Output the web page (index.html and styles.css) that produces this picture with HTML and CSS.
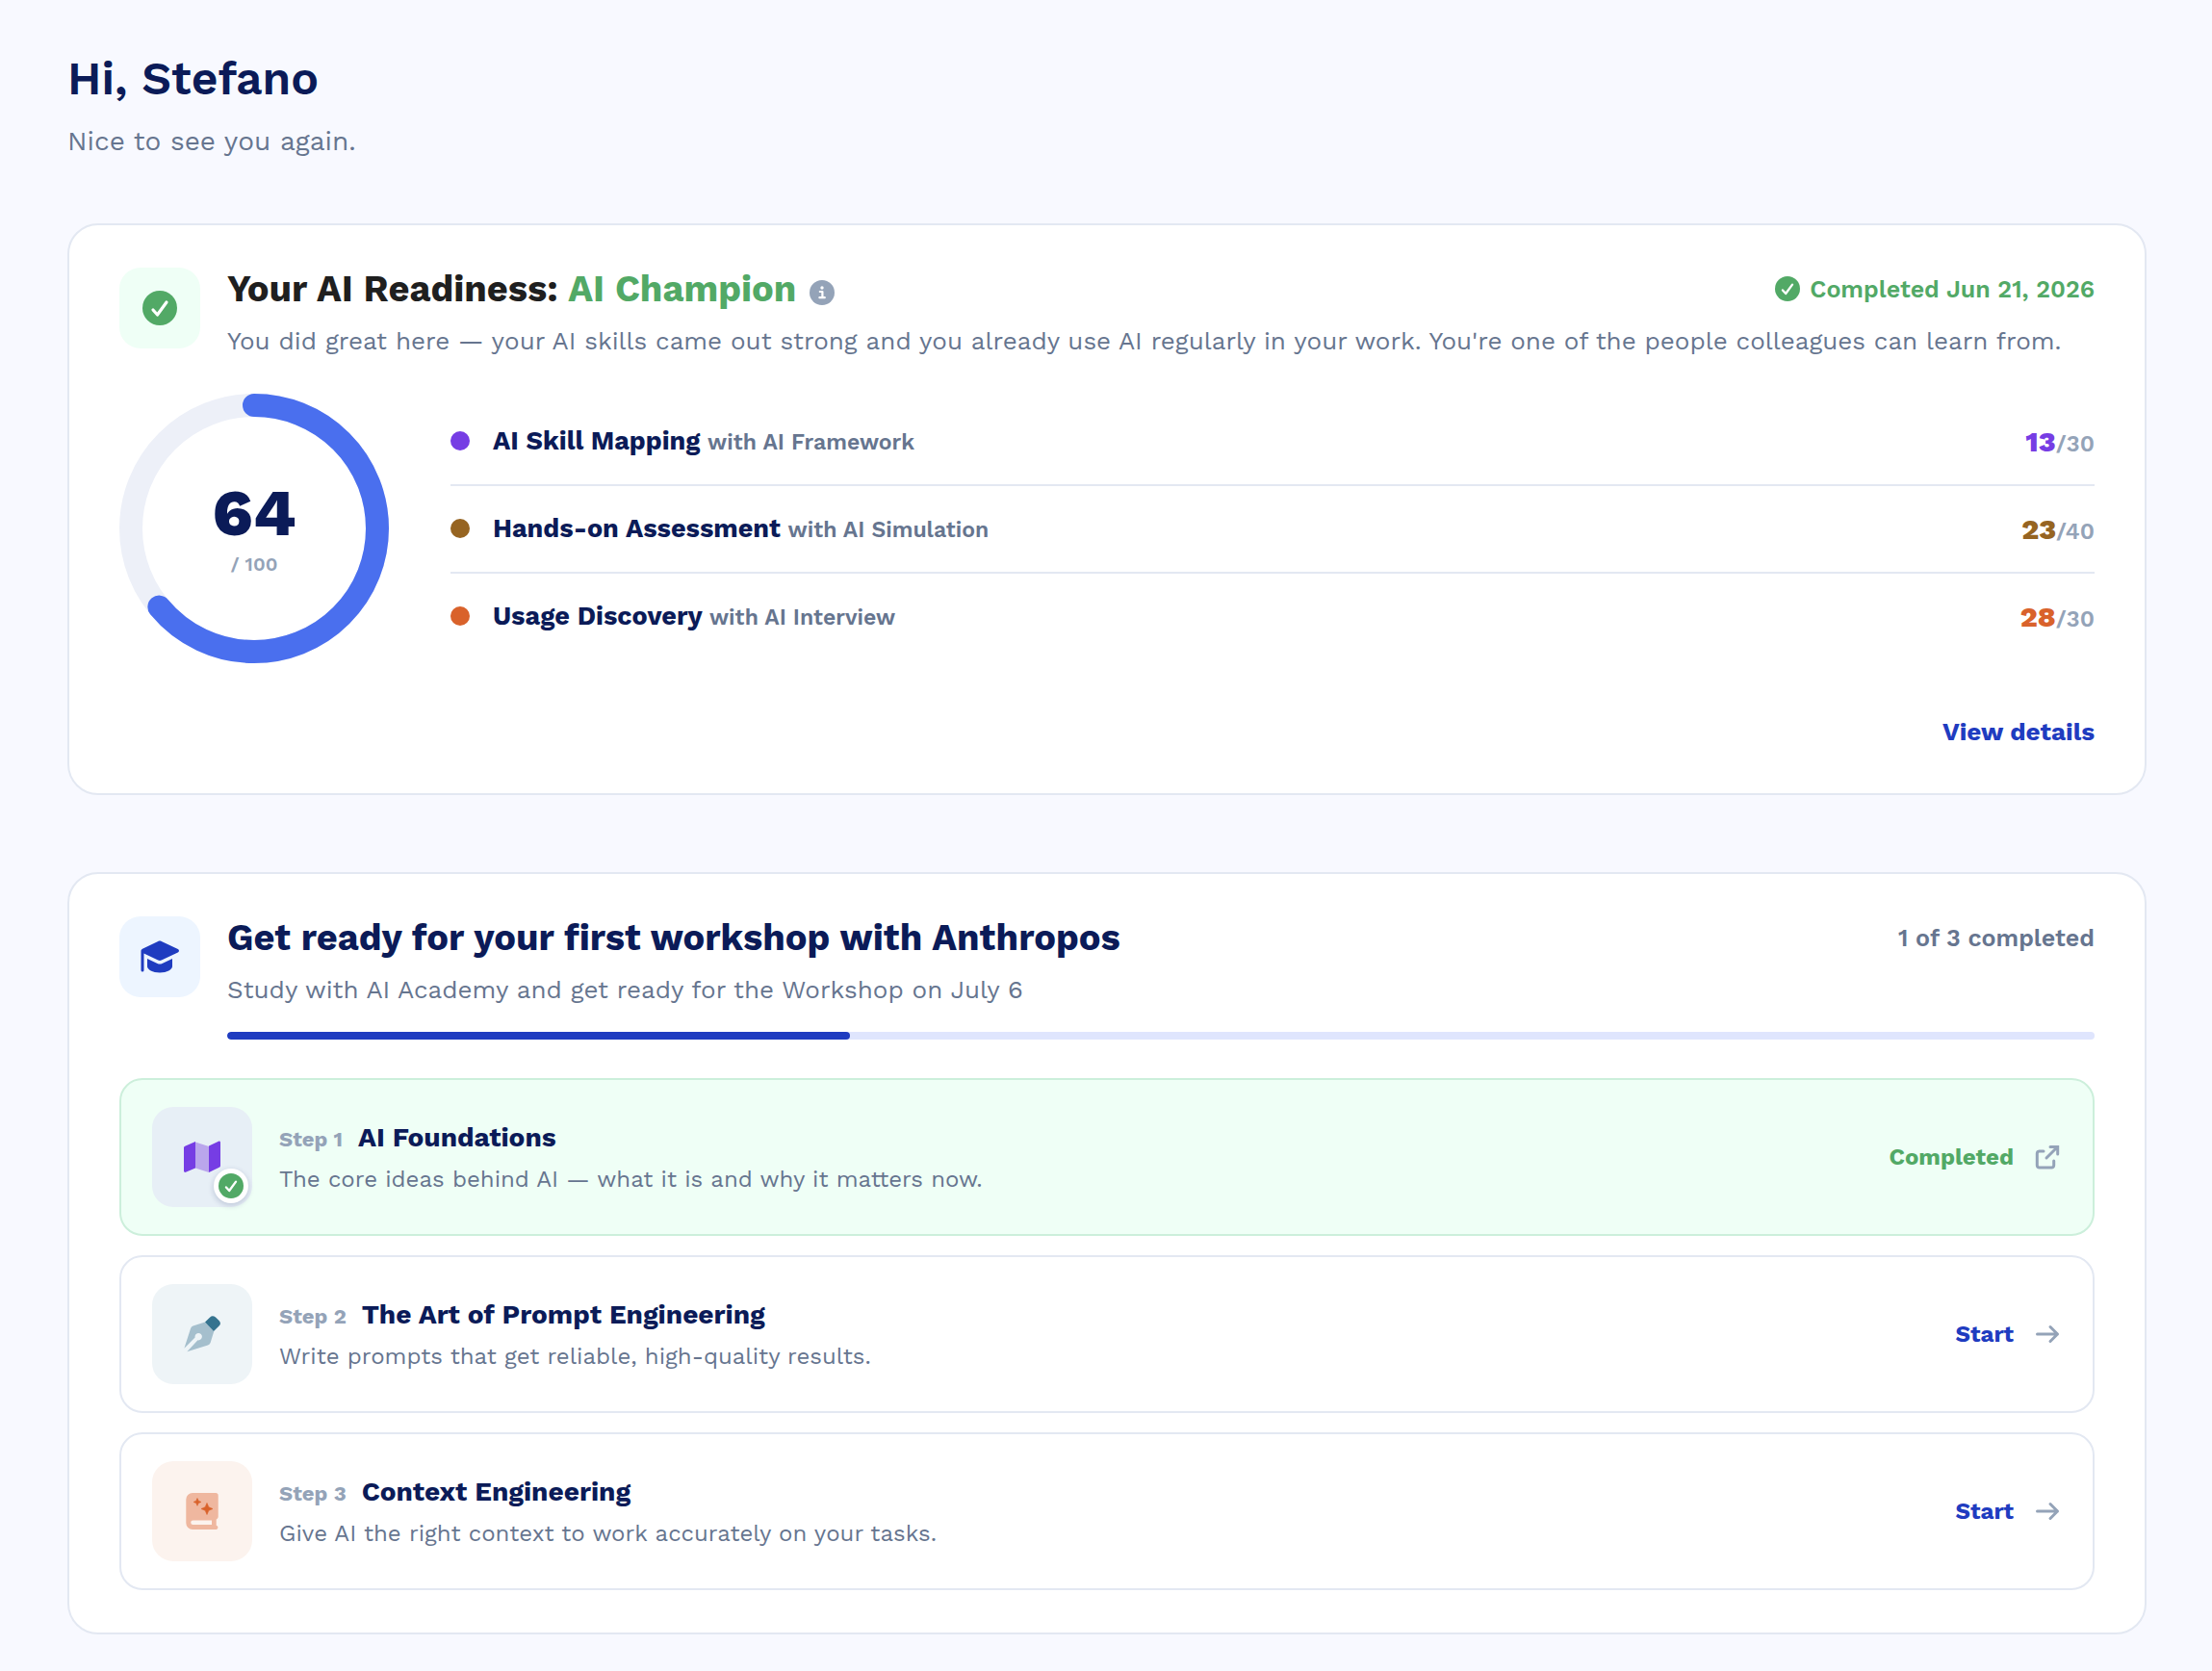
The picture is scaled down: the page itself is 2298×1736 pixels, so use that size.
FILE: index.html
```html
<!DOCTYPE html>
<html lang="en">
<head>
<meta charset="utf-8">
<meta name="viewport" content="width=device-width, initial-scale=1">
<title>AI Readiness</title>
<link rel="stylesheet" href="styles.css">
</head>
<body>
<svg class="sprite" aria-hidden="true">
  <symbol id="check" viewBox="0 0 36 36">
    <circle cx="18" cy="18" r="18" fill="#52a966"/>
    <path d="M11 20l4.500 5L25 12" fill="none" stroke="#fff" stroke-width="3.200" stroke-linecap="round" stroke-linejoin="round"/>
  </symbol>
  <symbol id="arrow" viewBox="1 0 28 28">
    <path d="M3.500 14h21M17 6.500L24.500 14 17 21.500" fill="none" stroke="#94a3b8" stroke-width="3" stroke-linecap="round" stroke-linejoin="round"/>
  </symbol>
</svg>
<main class="page">
  <header class="greeting">
    <h1 class="greeting-title">Hi, Stefano</h1>
    <p class="greeting-text">Nice to see you again.</p>
  </header>

  <section class="card">
    <div class="card-head">
      <div class="tile tile-green"><svg class="tile-check"><use href="#check"/></svg></div>
      <div class="card-intro">
        <div class="title-row">
          <h2 class="card-title title-dark">Your AI Readiness: <span class="green">AI Champion</span></h2>
          <button class="info" type="button" aria-label="About this result">
            <svg viewBox="0 0 26 26" class="info-icon"><circle cx="13" cy="13" r="13" fill="#94a3b8"/><circle cx="13" cy="8" r="1.700" fill="#fff"/><path d="M10.800 12H13.400v6M10.400 18.200h5.400" fill="none" stroke="#fff" stroke-width="2.200" stroke-linecap="round" stroke-linejoin="round"/></svg>
          </button>
          <p class="status green"><svg class="status-check"><use href="#check"/></svg>Completed Jun 21, 2026</p>
        </div>
        <p class="card-text">You did great here — your AI skills came out strong and you already use AI regularly in your work. You're one of the people colleagues can learn from.</p>
      </div>
    </div>
    <div class="results">
      <div class="ring">
        <svg class="ring-chart" viewBox="0 0 280 280" aria-hidden="true">
          <circle cx="140" cy="140" r="128" fill="none" stroke="#edf0f8" stroke-width="24"/>
          <circle cx="140" cy="140" r="128" fill="none" stroke="#4a6fee" stroke-width="24" stroke-linecap="round" pathLength="100" stroke-dasharray="64 100" transform="rotate(-90 140 140)"/>
        </svg>
        <div class="ring-label"><strong class="ring-score">64</strong><span class="ring-total">/ 100</span></div>
      </div>
      <ul class="scores">
        <li class="score purple"><span class="dot"></span><p class="score-name">AI Skill Mapping <span class="score-with">with AI Framework</span></p><p class="score-value">13<span class="score-max">/30</span></p></li>
        <li class="score brown"><span class="dot"></span><p class="score-name">Hands-on Assessment <span class="score-with">with AI Simulation</span></p><p class="score-value">23<span class="score-max">/40</span></p></li>
        <li class="score orange"><span class="dot"></span><p class="score-name">Usage Discovery <span class="score-with">with AI Interview</span></p><p class="score-value">28<span class="score-max">/30</span></p></li>
      </ul>
    </div>
    <div class="card-foot"><a class="details" href="#details">View details</a></div>
  </section>

  <section class="card">
    <div class="card-head">
      <div class="tile tile-blue">
        <svg class="cap" viewBox="0 0 44 36"><path d="M22 1.500c.7 0 1.200.1 1.800.4l17 8c1.600.8 1.600 2.800 0 3.600l-17 8c-1.200.5-2.400.5-3.600 0L5.500 14.600V32a1.500 1.500 0 0 1-3 0V12c0-1 .6-1.700 1.500-2.200l16.200-7.900c.6-.3 1.100-.4 1.800-.4z" fill="#1f3cc0"/><path d="M9 20l10.500 5c1.700.8 3.300.8 5 0L35 20v8c0 3-5.500 6.500-13 6.500S9 31 9 28z" fill="#1f3cc0"/></svg>
      </div>
      <div class="card-intro">
        <div class="title-row">
          <h2 class="card-title">Get ready for your first workshop with Anthropos</h2>
          <p class="status">1 of 3 completed</p>
        </div>
        <p class="card-text">Study with AI Academy and get ready for the Workshop on July 6</p>
        <div class="progress"><div class="progress-fill"></div></div>
      </div>
    </div>
    <div class="steps">
      <a class="step step-done" href="#foundations">
        <div class="step-tile tile-map">
          <svg class="step-icon" viewBox="0 0 40 40"><path d="M13 4.500L27 9v27L13 31.500z" fill="#baa6ec"/><path d="M13 4v27.500L3 35.800c-1 .4-2-.2-2-1.200V10.500c0-.8.4-1.500 1.200-1.800zM27 8.500L37 3.700c1-.5 2 .1 2 1.200V29c0 .8-.4 1.500-1.200 1.800L27 36z" fill="#763de4"/></svg>
          <span class="badge"><svg class="badge-check"><use href="#check"/></svg></span>
        </div>
        <div class="step-body">
          <h3 class="step-title"><span class="step-number">Step 1</span>AI Foundations</h3>
          <p class="step-text">The core ideas behind AI — what it is and why it matters now.</p>
        </div>
        <span class="step-action green">Completed</span>
        <svg class="action-icon" viewBox="1 0 28 28"><path d="M10 8H5.500A2.500 2.500 0 0 0 3.300 10.300v12.400A2.300 2.300 0 0 0 5.600 25h12.800a2.300 2.300 0 0 0 2.300-2.300V18M17 3.400h7.700v7.700M24.300 3.700L13 15" fill="none" stroke="#94a3b8" stroke-width="3" stroke-linecap="round" stroke-linejoin="miter"/></svg>
      </a>
      <a class="step" href="#prompting">
        <div class="step-tile tile-pen">
          <svg class="step-icon" viewBox="0 0 40 40"><path fill="#a5bfcd" d="M23 7.500L10.500 11.600Q8.600 12.300 8 14.300L1.400 34.700 12.600 23.500A3.700 3.700 0 1 1 15.500 26.300L4.300 38.200 26 31.500Q28 30.800 28.600 29L32.300 17z"/><path fill="#35738f" d="M23 7.600L28.200 2.400Q30.700-.1 34 2.400L37.600 6Q40.300 9 37.600 11.500L32 17z"/></svg>
        </div>
        <div class="step-body">
          <h3 class="step-title"><span class="step-number">Step 2</span>The Art of Prompt Engineering</h3>
          <p class="step-text">Write prompts that get reliable, high-quality results.</p>
        </div>
        <span class="step-action">Start</span>
        <svg class="action-icon"><use href="#arrow"/></svg>
      </a>
      <a class="step" href="#context">
        <div class="step-tile tile-book">
          <svg class="step-icon" viewBox="0 0 40 40"><path fill="#efb79f" fill-rule="evenodd" d="M10 1h24a2.700 2.700 0 0 1 2.700 2.700v22c0 1.300-.7 2-2 2.700v6.300a2.200 2.200 0 0 1 0 4.300H10a6.700 6.700 0 0 1-6.700-6.700V7.700A6.700 6.700 0 0 1 10 1zm.5 28.500a2.300 2.300 0 0 0 0 4.600H30v-4.600z"/><path fill="#d9622b" d="M15 6.500l1.200 2.700 2.700 1.200-2.700 1.200L15 14.300l-1.200-2.700-2.700-1.200 2.700-1.200zM25 11.500l1.800 4.200 4.200 1.800-4.200 1.800-1.800 4.200-1.800-4.200-4.200-1.800 4.200-1.800z" stroke="#d9622b" stroke-width=".6"/></svg>
        </div>
        <div class="step-body">
          <h3 class="step-title"><span class="step-number">Step 3</span>Context Engineering</h3>
          <p class="step-text">Give AI the right context to work accurately on your tasks.</p>
        </div>
        <span class="step-action">Start</span>
        <svg class="action-icon"><use href="#arrow"/></svg>
      </a>
    </div>
  </section>
</main>
</body>
</html>
```
FILE: styles.css
```css
* { box-sizing: border-box; }
body {
  margin: 0;
  background: #f8f9ff;
  color: #0b1b58;
  font-family: "Work Sans", Inter, "Liberation Sans", sans-serif;
}
h1, h2, h3, p, ul { margin: 0; padding: 0; }
a { color: inherit; text-decoration: none; }
svg { display: block; flex: none; }
.sprite { position: absolute; width: 0; height: 0; }
.green { color: #52a966; }

.page { padding: 52px 68px 38px 70px; }
.greeting { margin-bottom: 65px; }
.greeting-title { font-size: 48px; line-height: 60px; font-weight: 600; }
.greeting-text { margin-top: 15px; font-size: 28px; line-height: 40px; color: #66758f; }

.card {
  padding: 44px 52px;
  border: 2px solid #e3e8f2;
  border-radius: 32px;
  background: #fff;
}
.card + .card { margin-top: 80px; }
.card-head { display: flex; gap: 28px; }
.tile {
  display: flex;
  flex: none;
  align-items: center;
  justify-content: center;
  width: 84px;
  height: 84px;
  border-radius: 22px;
}
.tile-green { background: #effff6; }
.tile-blue { background: #edf5ff; }
.tile-check { width: 36px; height: 36px; }
.cap { width: 44px; height: 36px; }
.card-intro { flex: 1; min-width: 0; }
.title-row { display: flex; align-items: center; }
.card-title { font-size: 38px; line-height: 44px; font-weight: 700; }
.title-dark { color: #1f1f1f; }
.info { margin: 8px 0 0 14px; padding: 0; border: 0; background: none; }
.info-icon { width: 26px; height: 26px; }
.status {
  display: flex;
  align-items: center;
  gap: 10px;
  margin-left: auto;
  font-size: 25px;
  line-height: 33px;
  font-weight: 600;
  color: #66758f;
}
.status.green { color: #52a966; }
.status-check { width: 26px; height: 26px; }
.card-text { margin-top: 12px; font-size: 26px; line-height: 40px; color: #66758f; }

.results { display: flex; align-items: center; gap: 64px; margin-top: 35px; }
.ring { display: grid; flex: none; width: 280px; height: 280px; }
.ring-chart, .ring-label { grid-area: 1 / 1; }
.ring-label { display: flex; flex-direction: column; align-items: center; justify-content: center; gap: 9px; }
.ring-score { font-size: 68px; line-height: 64px; font-weight: 800; }
.ring-total { font-size: 20px; line-height: 24px; font-weight: 600; color: #94a3b8; }
.scores { flex: 1; list-style: none; }
.score { display: flex; align-items: center; padding: 28px 0; }
.score + .score { border-top: 2px solid #e3e8f2; }
.purple { color: #763de4; }
.brown { color: #966421; }
.orange { color: #d9622b; }
.dot { width: 20px; height: 20px; margin-right: 24px; border-radius: 50%; background: currentColor; }
.score-name { flex: 1; font-size: 27px; line-height: 33px; font-weight: 700; color: #0b1b58; }
.score-with { font-size: 23px; line-height: 1; font-weight: 600; color: #66758f; }
.score-value { font-size: 30px; line-height: 33px; font-weight: 800; }
.score-max { font-size: 24px; line-height: 1; font-weight: 600; color: #94a3b8; }
.card-foot { display: flex; justify-content: flex-end; margin-top: 51px; }
.details { font-size: 26px; line-height: 40px; font-weight: 700; color: #1f3cc0; }

.progress { height: 8px; margin-top: 24px; border-radius: 4px; background: #dfe5fd; overflow: hidden; }
.progress-fill { width: 33.333%; height: 100%; border-radius: 4px; background: #1f3cc0; }
.steps { display: flex; flex-direction: column; gap: 20px; margin-top: 40px; }
.step {
  display: flex;
  align-items: center;
  padding: 28px 32px;
  border: 2px solid #e3e8f2;
  border-radius: 24px;
}
.step-done { border-color: #ccefdb; background: #effff6; }
.step-tile {
  position: relative;
  display: flex;
  flex: none;
  align-items: center;
  justify-content: center;
  width: 104px;
  height: 104px;
  margin-right: 28px;
  border-radius: 22px;
}
.tile-map { background: #e7eff6; }
.tile-pen { background: #eef4f7; }
.tile-book { background: #fcf3ee; }
.step-icon { width: 40px; height: 40px; }
.badge {
  position: absolute;
  right: 4px;
  bottom: 4px;
  padding: 5px;
  border-radius: 50%;
  background: #fff;
  box-shadow: 0 2px 6px rgba(11, 27, 88, 0.2);
}
.badge-check { width: 26px; height: 26px; }
.step-body { flex: 1; padding-top: 2px; }
.step-title { font-size: 28px; line-height: 40px; font-weight: 700; }
.step-number { margin-right: 16px; font-size: 22px; line-height: 1; font-weight: 700; color: #94a3b8; }
.step-text { margin-top: 3px; font-size: 24px; line-height: 40px; color: #66758f; }
.step-action { margin-right: 22px; font-size: 24px; line-height: 32px; font-weight: 700; color: #1f3cc0; }
.step-action.green { color: #52a966; }
.action-icon { width: 28px; height: 28px; }
```
